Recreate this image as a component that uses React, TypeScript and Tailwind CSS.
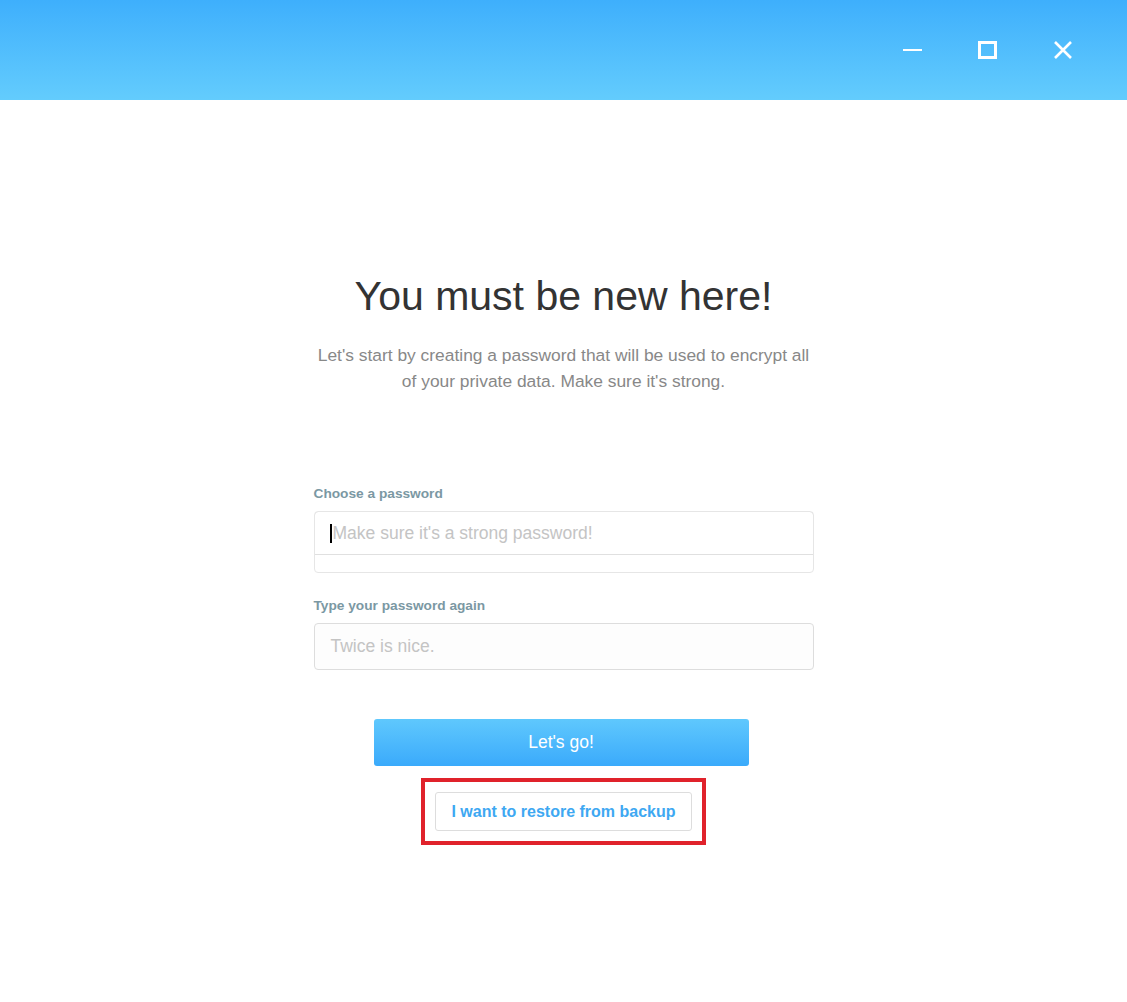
import React from "react";

export default function App() {
  return (
    <div className="w-[1127px] h-[1002px] bg-white flex flex-col" style={{ fontFamily: '"Liberation Sans", Arial, sans-serif' }}>
      <div className="h-[100px] w-full bg-gradient-to-b from-[#3eaffc] to-[#63ccfd] flex items-center justify-end pr-[27px] shrink-0">
        <div className="flex items-center">
          <div className="w-[75px] h-[40px] flex items-center justify-center">
            <div className="w-[19px] h-[2px] bg-white" />
          </div>
          <div className="w-[75px] h-[40px] flex items-center justify-center">
            <div className="w-[19px] h-[18px] border-[3px] border-white" />
          </div>
          <div className="w-[75px] h-[40px] flex items-center justify-center">
            <svg width="20" height="20" viewBox="0 0 20 20">
              <path d="M2 2 L18 18 M18 2 L2 18" stroke="white" strokeWidth="2.6" />
            </svg>
          </div>
        </div>
      </div>
      <div className="flex flex-col items-center">
        <h1 className="mt-[172px] text-[41px] leading-[48px] text-[#333333] font-normal">You must be new here!</h1>
        <p className="mt-[22px] w-[500px] text-center text-[17.4px] leading-[26px] text-[#888888]">
          Let's start by creating a password that will be used to encrypt all of your private data. Make sure it's strong.
        </p>
        <div className="mt-[92px] w-[500px] flex flex-col">
          <label className="text-[13.7px] font-bold text-[#7b98a3] leading-[16px] mb-[9px]">Choose a password</label>
          <div className="rounded-[4px] border border-[#e6e6e6] overflow-hidden">
            <div className="h-[44px] border border-[#cfcfcf] border-b-[#e0e0e0] rounded-t-[4px] -m-px mb-0 flex items-center pl-[15px] relative">
              <div className="w-[2px] h-[19px] bg-black mr-[1px]" />
              <span className="text-[17.5px] text-[#c4c4c4]">Make sure it's a strong password!</span>
            </div>
            <div className="h-[17px]" />
          </div>
          <label className="mt-[25px] text-[13.7px] font-bold text-[#7b98a3] leading-[16px] mb-[9px]">Type your password again</label>
          <div className="h-[47px] rounded-[4px] border border-[#dddddd] bg-[#fdfdfd] flex items-center pl-[16px]">
            <span className="text-[17.5px] text-[#c4c4c4]">Twice is nice.</span>
          </div>
        </div>
        <button className="mt-[49px] mr-[5px] w-[375px] h-[47px] rounded-[3px] bg-gradient-to-b from-[#5fc8fd] to-[#3aaafb] text-white text-[17.5px] flex items-center justify-center">
          Let's go!
        </button>
        <div className="mt-[12px] w-[285px] h-[67px] border-[4px] border-[#e0222b] flex items-center justify-center">
          <div className="w-[257px] h-[39px] border border-[#dddddd] rounded-[3px] bg-white flex items-center justify-center text-[16px] font-bold text-[#3ea8f2]">
            I want to restore from backup
          </div>
        </div>
      </div>
    </div>
  );
}
